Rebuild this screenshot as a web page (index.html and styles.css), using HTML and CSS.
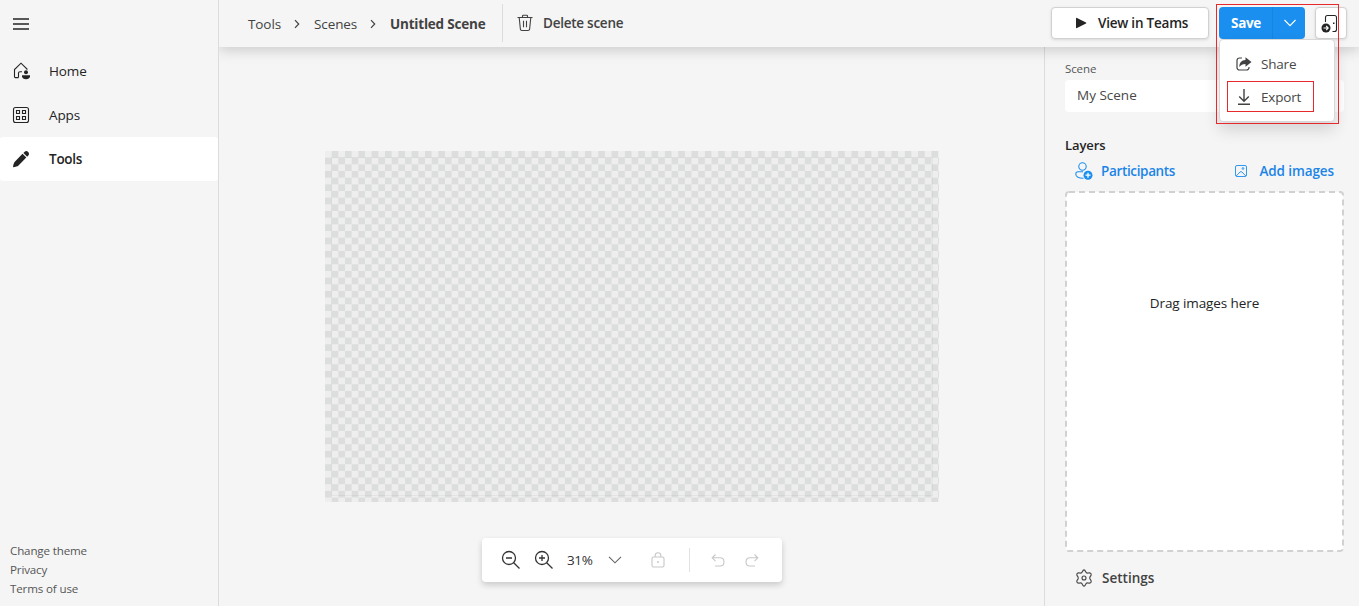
FILE: index.html
```html
<!DOCTYPE html>
<html lang="en">
<head>
<meta charset="utf-8">
<title>Untitled Scene</title>
<link rel="stylesheet" href="styles.css">
</head>
<body>
<div class="app">
  <nav class="sidebar">
    <button class="menu" aria-label="Menu"><svg width="16" height="12" viewBox="0 0 16 12" stroke="#242424" stroke-width="1.4"><path d="M0 1h16M0 6h16M0 11h16"/></svg></button>
    <a class="nav-item"><svg width="18" height="18" viewBox="0 0 18 18" fill="none" stroke="#242424" stroke-width="1.1"><path d="M6.500 15.600H3.300a.8.8 0 0 1-.8-.8V7.500L9 1.200l6 5.800v.8M6.500 15.600v-4.500q0-1.300 1.500-1.300h2"/><circle cx="14" cy="10.200" r="2" fill="#242424" stroke="none"/><path d="M10 13.200h8v1c0 4-8 4-8 0z" fill="#242424" stroke="none"/></svg><span>Home</span></a>
    <a class="nav-item"><svg width="18" height="18" viewBox="0 0 18 18" fill="none" stroke="#242424" stroke-width="1.100"><rect x="1.500" y="1.500" width="15" height="15" rx="2"/><path d="M4.500 4.500h3v3h-3zM10.500 4.500h3v3h-3zM4.500 10.500h3v3h-3zM10.500 10.500h3v3h-3z"/></svg><span>Apps</span></a>
    <a class="nav-item active"><svg width="18" height="18" viewBox="0 0 18 18" fill="#242424"><path d="M10.500 3.800l3.800 3.800-7.800 7.800c-1 1-3 1.400-5.500 1.800.3-2.500.8-4.400 1.800-5.500zM11.400 2.900l1.300-1.200c2.200-2 5.600 1.400 3.800 3.600l-1.300 1.400z"/></svg><span>Tools</span></a>
    <div class="legal"><a>Change theme</a><a>Privacy</a><a>Terms of use</a></div>
  </nav>
  <div class="workspace">
    <header class="topbar">
      <div class="crumbs">
        <span class="c-tools">Tools</span><svg width="6" height="10" viewBox="0 0 6 10" fill="none" stroke="#424242" stroke-width="1.200"><path d="M1 1.200l3.700 3.800L1 8.800"/></svg>
        <span class="c-scenes">Scenes</span><svg width="6" height="10" viewBox="0 0 6 10" fill="none" stroke="#424242" stroke-width="1.200"><path d="M1 1.200l3.700 3.800L1 8.800"/></svg>
        <b class="c-current">Untitled Scene</b>
      </div>
      <button class="delete"><svg width="16" height="18" viewBox="0 0 16 18" fill="none" stroke="#424242" stroke-width="1.100"><path d="M.5 3.500h15M5.500 3.300V2q0-.8.800-.8h3.400q.8 0 .8.800v1.300M2.200 3.500l1.200 11.700q.2 1.300 1.500 1.300h6.200q1.300 0 1.500-1.300l1.200-11.700M6.500 6.800v6.400M9.500 6.800v6.400"/></svg><span>Delete scene</span></button>
      <div class="actions">
        <button class="view"><svg width="12" height="12" viewBox="0 0 12 12" fill="#242424"><path d="M1 1.500q0-1 1-.6l9 4.500q.7.600 0 1.200l-9 4.500q-1 .4-1-.6z"/></svg><span>View in Teams</span></button>
        <div class="split">
          <button class="save"><span>Save</span></button>
          <button class="more" aria-label="More"><svg width="14" height="8" viewBox="0 0 14 8" fill="none" stroke="#fff" stroke-width="1.100"><path d="M1.500 1L7 6.600 12.500 1"/></svg></button>
          <div class="dropdown">
            <a class="option"><svg width="16" height="16" viewBox="0 0 16 16"><path d="M6 2H3.500A2.500 2.500 0 0 0 1 4.500v7A2.500 2.500 0 0 0 3.500 14h7a2.500 2.500 0 0 0 2.500-2.500V11" fill="none" stroke="#424242" stroke-width="1.200"/><path d="M9.500 1.200L15.500 6l-6 4.800V8C6.500 8 4.800 9 3.300 11 3.300 7 5.500 4 9.500 3.900z" fill="#424242"/></svg><span>Share</span></a>
            <a class="option marked"><svg width="16" height="18" viewBox="0 0 16 18" fill="none" stroke="#424242" stroke-width="1.400"><path d="M8 1v12M3.200 8.500L8 13.200l4.800-4.700M2 16.200h12"/></svg><span>Export</span></a>
          </div>
          <div class="highlight"></div>
        </div>
        <button class="exit" aria-label="Exit"><svg width="18" height="20" viewBox="0 0 18 20" fill="none" stroke="#242424" stroke-width="1.100"><path d="M4.500 8V3.500q0-2 2-2h7q2 0 2 2v12q0 2-2 2h-2"/><rect x="12" y="8.500" width="1.500" height="1.500" fill="#242424" stroke="none"/><circle cx="5" cy="14" r="4.500" fill="#242424" stroke="none"/><path d="M2.500 14h4.600M5.200 12l2 2-2 2" stroke="#fff"/></svg></button>
      </div>
    </header>
    <div class="body">
      <main class="stage">
        <div class="canvas"></div>
        <div class="zoombar">
          <svg class="z-out" width="20" height="20" viewBox="0 0 20 20" fill="none" stroke="#333" stroke-width="1.300"><circle cx="8" cy="8" r="6.500"/><path d="M12.700 12.700l5.800 5.800M5 8h6"/></svg>
          <svg class="z-in" width="20" height="20" viewBox="0 0 20 20" fill="none" stroke="#333" stroke-width="1.300"><circle cx="8" cy="8" r="6.500"/><path d="M12.700 12.700l5.800 5.800M5 8h6M8 5v6"/></svg>
          <span class="percent">31%</span>
          <svg class="z-chev" width="14" height="8" viewBox="0 0 14 8" fill="none" stroke="#616161" stroke-width="1.100"><path d="M1 .8l6 6 6-6"/></svg>
          <svg class="z-lock" width="14" height="16" viewBox="0 0 14 16" fill="none" stroke="#c7c7c7" stroke-width="1.100"><rect x="1" y="5" width="12" height="10" rx="1.500"/><path d="M4.200 5V3.500C4.200-.2 9.800-.2 9.800 3.500V5"/><circle cx="7" cy="10" r="1" fill="#c7c7c7" stroke="none"/></svg>
          <i class="rule"></i>
          <svg class="z-undo" width="14" height="14" viewBox="0 0 14 14" fill="none" stroke="#c7c7c7" stroke-width="1.100"><path d="M4.500 1.500L1.200 4.800l3.300 3.300M1.500 4.800H9c5.300 0 5.300 8.200 0 8.200H4"/></svg>
          <svg width="14" height="14" viewBox="0 0 14 14" fill="none" stroke="#c7c7c7" stroke-width="1.100"><path d="M9.500 1.500l3.300 3.300-3.300 3.300M12.500 4.800H5c-5.300 0-5.300 8.200 0 8.200h5"/></svg>
        </div>
      </main>
      <aside class="panel">
        <label class="label">Scene</label>
        <div class="field">My Scene</div>
        <h2 class="heading">Layers</h2>
        <div class="adders">
          <a class="add-part"><svg width="18" height="18" viewBox="0 0 18 18" fill="none" stroke="#1b8fef" stroke-width="1.100"><circle cx="7.500" cy="4.500" r="3.700"/><path d="M8 9.700H3q-2.200 0-2.200 2.200C.8 15 4 16.300 8.500 16.200"/><circle cx="13" cy="13.200" r="4.500" fill="#1b8fef" stroke="none"/><path d="M10.500 13.200h5M13 10.700v5" stroke="#fff" stroke-width="1.300"/></svg><span>Participants</span></a>
          <a class="add-img"><svg width="12" height="12" viewBox="0 0 12 12" fill="none" stroke="#1b8fef" stroke-width=".9"><rect x=".5" y=".5" width="11" height="11" rx="1.500"/><path d="M1.200 11L5 7q1-.8 2 0l3.800 4"/><circle cx="8" cy="3.500" r=".9"/></svg><span>Add images</span></a>
        </div>
        <div class="drop"><svg class="dashes" width="279" height="361" viewBox="0 0 279 361"><rect x="1" y="1" width="277" height="359" rx="3" fill="#fff" stroke="#d1d1d1" stroke-width="2" stroke-dasharray="6 4"/></svg><span>Drag images here</span></div>
        <a class="settings"><svg width="18" height="18" viewBox="0 0 18 18" fill="none" stroke="#424242" stroke-width="1.100"><path d="M7.300 2.700Q9-1 10.700 2.700 11.300 4.400 13 4q4-.6 3 2.500-2.500 2.500 0 5 1 3.100-3 2.500-1.700-.4-2.300 1.300Q9 19 7.300 15.300 6.700 13.600 5 14q-4 .6-3-2.500 2.500-2.500 0-5Q1 3.400 5 4q1.700.4 2.300-1.300z"/><circle cx="9" cy="9" r="2"/></svg><span>Settings</span></a>
      </aside>
    </div>
  </div>
</div>
</body>
</html>
```
FILE: styles.css
```css
* { box-sizing: border-box; }
body { margin: 0; font: 13.5px/20px "Open Sans", "Noto Sans", sans-serif; letter-spacing: -.1px; color: #242424; background: #f5f5f5; }
button { font: inherit; letter-spacing: inherit; color: inherit; border: 0; background: none; padding: 0; margin: 0; display: flex; align-items: center; }
svg { display: block; flex: none; }
span, b { white-space: nowrap; }
.app { display: flex; width: 1359px; height: 606px; overflow: hidden; }
.sidebar { width: 219px; border-right: 1px solid #dcdcdc; display: flex; flex-direction: column; }
.menu { height: 49px; padding-left: 13px; }
.menu svg { margin-top: -1px; }
.nav-item { height: 44px; display: flex; align-items: center; padding-left: 12px; gap: 19px; border-radius: 3px; }
.active { background: #fff; font-weight: 600; letter-spacing: -.25px; }
.legal { margin-top: auto; padding: 0 0 8px 10px; display: flex; flex-direction: column; font-size: 11.6px; letter-spacing: -.15px; line-height: 19px; color: #555; }
.workspace { flex: 1; display: flex; flex-direction: column; min-width: 0; }
.topbar { height: 47px; display: flex; background: #f5f5f5; box-shadow: 0 3px 13px rgba(0,0,0,.18); z-index: 2; clip-path: inset(0 0 -100px 0); }
.crumbs { display: flex; align-items: center; width: 284px; height: 38px; margin-top: 4px; padding: 2px 0 0 29px; color: #424242; border-right: 1px solid #dcdcdc; }
.crumbs svg { margin-right: 14px; }
.c-tools { width: 46px; }
.c-scenes { width: 56px; }
.c-current { letter-spacing: -.2px; }
.delete { height: 46px; margin-left: 14px; gap: 10px; font-weight: 600; letter-spacing: -.25px; color: #424242; }
.actions { display: flex; margin-left: auto; padding: 7px 12px 0 0; }
.view, .exit { height: 32px; border: 1px solid #d1d1d1; border-radius: 4px; background: #fff; box-shadow: 0 1px 3px rgba(0,0,0,.12); }
.view { width: 158px; padding-left: 23px; gap: 11px; font-weight: 600; letter-spacing: -.22px; }
.split { position: relative; display: flex; margin: 0 10px; width: 86px; height: 32px; border-radius: 4px; background: #1b8fef; color: #fff; font-weight: 700; letter-spacing: -.3px; }
.save { width: 53px; padding-left: 12px; }
.more { flex: 1; justify-content: center; padding-left: 2px; border-left: 1px solid #1786e2; }
.exit { width: 32px; justify-content: center; padding: 2px 2px 0 0; }
.dropdown { position: absolute; left: 0; top: 32px; width: 116px; height: 83px; padding: 8px 0 0 8px; border: 1px solid #d8d8d8; border-radius: 4px; background: #fff; box-shadow: 0 8px 16px rgba(0,0,0,.14); color: #484848; font-weight: 400; letter-spacing: -.2px; }
.option { display: flex; align-items: center; width: 87px; height: 32px; gap: 9px; padding-left: 8px; }
.marked { height: 31px; margin: 1px 0 0 -1px; border: 1px solid #e8282b; }
.highlight { position: absolute; left: -3px; top: -3px; width: 123px; height: 120px; border: 1px solid #e8282b; }
.body { flex: 1; display: flex; min-height: 0; }
.stage { flex: 1; display: flex; flex-direction: column; padding: 104px 0 0 106px; }
.canvas { width: 614px; height: 351px; background: repeating-conic-gradient(#dcdedd 0 25%, #eee 0 50%) 0 0 / 13.340px 13.340px; display: grid; padding: 6px; }
.canvas::before { content: ""; border: 1px solid rgba(0,0,0,.04); }
.zoombar { display: flex; align-items: center; width: 300px; height: 44px; margin: 36px 0 0 157px; padding-left: 19px; background: #fff; border-radius: 4px; box-shadow: 0 3px 6px rgba(0,0,0,.18); color: #333; }
.z-out { margin-right: 13px; }
.z-in { margin-right: 13px; }
.percent { width: 41px; letter-spacing: -.4px; }
.z-chev { margin-right: 29px; }
.z-lock { margin-right: 24px; }
.rule { width: 1px; height: 24px; background: #e3e3e3; margin-right: 21px; }
.z-undo { margin-right: 20px; }
.panel { width: 315px; border-left: 1px solid #dcdcdc; padding: 12px 15px 0 20px; display: flex; flex-direction: column; }
.label { font-size: 11.5px; color: #555; height: 21px; }
.field { height: 32px; line-height: 31px; padding-left: 12px; border-radius: 4px; background: #fff; color: #484848; letter-spacing: 0; }
.heading { margin: 23px 0 0; font-size: 13px; font-weight: 600; line-height: 20px; }
.adders { display: flex; justify-content: space-between; height: 36px; padding: 0 10px 4px 10px; color: #1b84e8; font-weight: 600; }
.adders a { display: flex; align-items: center; }
.add-part { gap: 8px; letter-spacing: -.35px; }
.add-img { gap: 12px; }
.drop { position: relative; height: 361px; text-align: center; padding-top: 102px; }
.drop span { position: relative; }
.dashes { position: absolute; left: 0; top: 0; }
.settings { display: flex; align-items: center; gap: 9px; height: 20px; margin: 16px 0 0 10px; font-weight: 600; color: #424242; letter-spacing: 0; }
```
